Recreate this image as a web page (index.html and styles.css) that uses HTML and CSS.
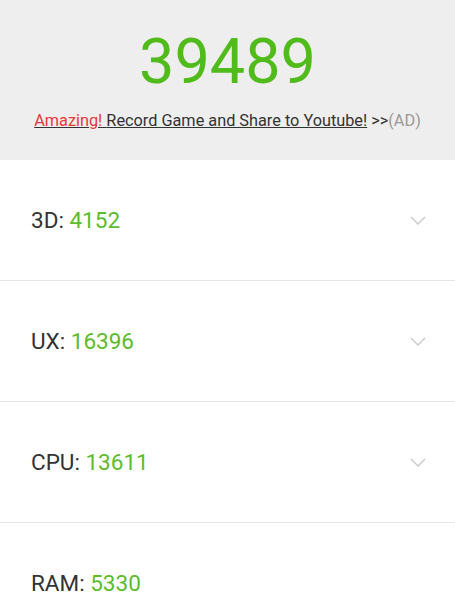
FILE: index.html
```html
<!DOCTYPE html>
<html lang="en">
<head>
    <meta charset="UTF-8">
    <meta name="viewport" content="width=device-width, initial-scale=1.0">
    <title>Score</title>
    <link rel="stylesheet" href="styles.css">
</head>
<body>
    <div class="score-header">
        <div class="total-score">39489</div>
        <div class="ad-line">
            <a class="ad-link" href="#"><span class="ad-hot">Amazing! </span>Record Game and Share to Youtube!</a>
            <span class="ad-arrows">&gt;&gt;</span><span class="ad-tag">(AD)</span>
        </div>
    </div>

    <ul class="score-list">
        <li class="score-row">
            <span class="score-name">3D: <span class="score-value">4152</span></span>
            <svg class="chevron" width="16" height="9" viewBox="0 0 16 9"><path d="M1 1 L8 8 L15 1" fill="none" stroke="#c8c8c8" stroke-width="1.3"/></svg>
        </li>
        <li class="score-row">
            <span class="score-name">UX: <span class="score-value">16396</span></span>
            <svg class="chevron" width="16" height="9" viewBox="0 0 16 9"><path d="M1 1 L8 8 L15 1" fill="none" stroke="#c8c8c8" stroke-width="1.3"/></svg>
        </li>
        <li class="score-row">
            <span class="score-name">CPU: <span class="score-value">13611</span></span>
            <svg class="chevron" width="16" height="9" viewBox="0 0 16 9"><path d="M1 1 L8 8 L15 1" fill="none" stroke="#c8c8c8" stroke-width="1.3"/></svg>
        </li>
        <li class="score-row">
            <span class="score-name">RAM: <span class="score-value">5330</span></span>
        </li>
    </ul>
</body>
</html>
```

FILE: styles.css
```css
body {
    margin: 0;
    font-family: Roboto, "Liberation Sans", sans-serif;
    background-color: #fff;
    color: #333;
}

.score-header {
    background-color: #efeeee;
    height: 160px;
    box-sizing: border-box;
    padding-top: 27px;
    text-align: center;
}

.total-score {
    font-size: 63px;
    line-height: 70px;
    color: #52bb1c;
}

.ad-line {
    margin-top: 14px;
    font-size: 16.3px;
    line-height: 20px;
}

.ad-link {
    color: #333;
    text-decoration: underline;
}

.ad-hot {
    color: #e5383b;
}

.ad-arrows {
    color: #333;
}

.ad-tag {
    color: #999;
}

.score-list {
    list-style: none;
    margin: 0;
    padding: 0;
}

.score-row {
    height: 120px;
    display: flex;
    align-items: center;
    justify-content: space-between;
    padding: 0 29px 0 31px;
    border-bottom: 1px solid #e6e6e6;
}

.score-row:last-child {
    border-bottom: none;
}

.score-name {
    font-size: 22.5px;
    color: #333;
}

.score-value {
    color: #5cbc2c;
}

.chevron {
    display: block;
}
```
